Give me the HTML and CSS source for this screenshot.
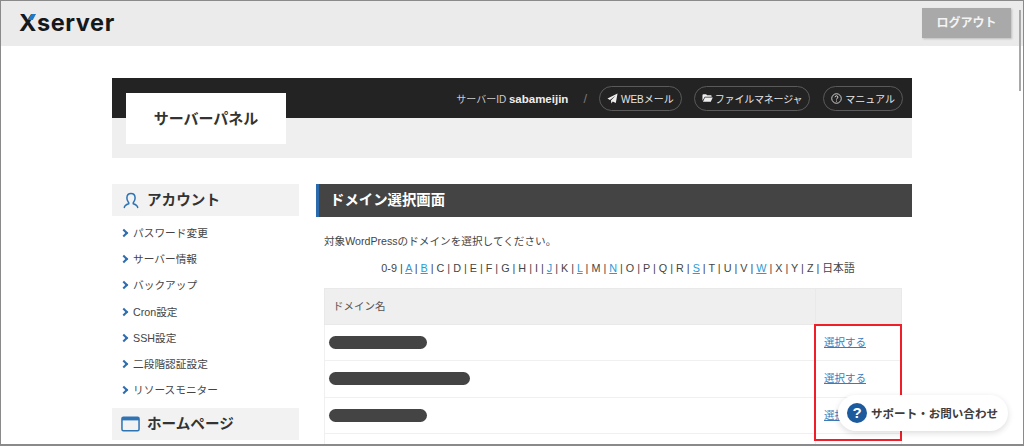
FILE: index.html
```html
<!DOCTYPE html>
<html lang="ja">
<head>
<meta charset="utf-8">
<title>サーバーパネル</title>
<link rel="stylesheet" href="styles.css">
</head>
<body>
<div class="window">
  <header class="topbar">
    <div class="logo"><span class="logo-x">X<i class="logo-tick"></i></span>server</div>
    <a class="logout">ログアウト</a>
  </header>
  <div class="scrollthumb"></div>
  <div class="page">
    <section class="panel">
      <div class="panel-dark">
        <div class="server-id">サーバーID <b>sabameijin</b></div>
        <span class="slash">/</span>
        <a class="pill">
          <svg class="pill-icon" viewBox="0 0 12 12"><path d="M11.5.5 9.6 11 6.3 9.2 4.8 11.5 4.3 8.2 9.5 2.6 3.2 7.5.5 6z" fill="#eee"/></svg>WEBメール</a>
        <a class="pill pill-files">
          <svg class="pill-icon pill-icon-wide" viewBox="0 0 12 10"><path d="M.5 2c0-.6.4-1 1-1h3l1 1h4c.5 0 1 .4 1 1v.6H3L.5 8z" fill="#eee"/><path d="M3.3 4.4h8.4L9.6 9H1z" fill="#eee"/></svg>ファイルマネージャ</a>
        <a class="pill pill-manual">
          <svg class="pill-icon" viewBox="0 0 12 12"><circle cx="6" cy="6" r="5.2" fill="none" stroke="#eee" stroke-width=".9"/><path d="M4.4 4.6C4.5 3.6 5.2 3.1 6 3.1c.9 0 1.6.6 1.6 1.4 0 1.2-1.6 1.3-1.6 2.6" fill="none" stroke="#eee"/><circle cx="6" cy="8.8" r=".6" fill="#eee"/></svg>マニュアル</a>
      </div>
      <div class="panel-light"></div>
      <div class="panel-tab">サーバーパネル</div>
    </section>
    <div class="columns">
      <aside class="sidebar">
        <h2 class="side-head">
          <svg class="side-icon" viewBox="0 0 18 18"><path d="M1.5 17c0-2.6 2-3.5 5-4.4.3-1-.1-1.3-.8-2.3C4.9 9.200 4.400 7.800 4.400 6.200 4.400 3 6.300 1.200 9 1.200s4.600 1.800 4.600 5c0 1.600-.5 3-1.300 4.100-.7 1-1.100 1.300-.8 2.300 3 .9 5 1.800 5 4.400" fill="none" stroke="#2e74b5" stroke-width="1.700" stroke-linecap="round"/></svg>
          <span class="side-text">アカウント</span>
        </h2>
        <ul class="side-list">
          <li>パスワード変更</li>
          <li>サーバー情報</li>
          <li>バックアップ</li>
          <li>Cron設定</li>
          <li>SSH設定</li>
          <li>二段階認証設定</li>
          <li>リソースモニター</li>
        </ul>
        <h2 class="side-head">
          <svg class="side-icon side-icon-wide" viewBox="0 0 20 16"><rect x="1" y="1" width="18" height="14" rx="1.500" fill="none" stroke="#2e74b5" stroke-width="1.600"/><rect x="1" y="1" width="18" height="3.200" fill="#2e74b5"/></svg>
          <span class="side-text">ホームページ</span>
        </h2>
      </aside>
      <main class="main">
        <h1 class="main-title">ドメイン選択画面</h1>
        <p class="lead">対象WordPressのドメインを選択してください。</p>
        <p class="alpha">0-9 | <a>A</a> | <a>B</a> | C | D | E | F | G | H | I | <a>J</a> | K | <a>L</a> | M | <a>N</a> | O | P | Q | R | <a>S</a> | T | U | V | <a>W</a> | X | Y | Z | 日本語</p>
        <div class="table-wrap">
          <table class="domains">
            <thead>
              <tr><th class="col-name">ドメイン名</th><th class="col-action"></th></tr>
            </thead>
            <tbody>
              <tr><td><span class="mask mask-s"></span></td><td><a class="select">選択する</a></td></tr>
              <tr><td><span class="mask mask-l"></span></td><td><a class="select">選択する</a></td></tr>
              <tr><td><span class="mask mask-s"></span></td><td><a class="select">選択する</a></td></tr>
              <tr><td></td><td></td></tr>
            </tbody>
          </table>
          <div class="highlight"></div>
        </div>
      </main>
    </div>
  </div>
  <a class="support"><span class="support-q">?</span>サポート・お問い合わせ</a>
</div>
</body>
</html>
```

FILE: styles.css
```css
* { box-sizing: border-box; }
html, body { margin: 0; height: 447px; overflow: hidden; background: #fff; }
body { font-family: "Liberation Sans", "Noto Sans CJK JP", sans-serif; color: #333; }

.window {
  position: relative;
  height: 446px;
  overflow: hidden;
  border: 1px solid #8a8a8a;
  border-width: 1px 1px 2px 1px;
  background: #fff;
}

.topbar {
  height: 45px;
  background: #ebebeb;
  display: flex;
  align-items: flex-start;
  justify-content: space-between;
  padding: 7px 12px 0 18px;
}
.logo {
  font-family: Inter, "Liberation Sans", sans-serif;
  font-weight: 700;
  font-size: 23.500px;
  line-height: 30px;
  letter-spacing: 0.6px;
  color: #16191c;
}
.logo-x { position: relative; display: inline-block; }
.logo-tick {
  position: absolute;
  left: 9px;
  top: 6px;
  width: 8px;
  height: 6px;
  background: #1f78c8;
  clip-path: polygon(40% 0, 100% 0, 60% 100%, 0 100%);
}
.logout {
  width: 89px;
  height: 30px;
  background: #a9a9a9;
  color: #f4f4f4;
  font-size: 12px;
  font-weight: 700;
  line-height: 30px;
  text-align: center;
  box-shadow: 1px 1px 2px rgba(0, 0, 0, .2);
}
.scrollthumb {
  position: absolute;
  top: 9px;
  right: 2px;
  width: 2px;
  height: 81px;
  background: #a8a8a8;
}

.page { width: 800px; margin: 32px 0 0 111px; }

.panel { position: relative; }
.panel-dark {
  height: 40px;
  background: #232323;
  display: flex;
  align-items: center;
  justify-content: flex-end;
  padding-right: 9px;
  color: #ddd;
  font-size: 10px;
}
.server-id { color: #ccc; }
.server-id b { color: #eee; font-size: 11.500px; }
.slash { margin: 0 12px 0 15px; color: #777; font-size: 13px; }
.pill {
  height: 25px;
  margin-left: 12px;
  padding: 0 7px;
  display: flex;
  align-items: center;
  border: 1px solid #5a5a5a;
  border-radius: 13px;
  color: #e6e6e6;
  white-space: nowrap;
}
.pill:first-of-type { margin-left: 0; }
.pill-files { letter-spacing: -0.2px; }
.pill-manual { margin-left: 13px; }
.pill-icon { width: 11px; height: 11px; margin-right: 3px; flex: none; }
.pill-icon-wide { height: 10px; margin-right: 2px; }
.panel-light { height: 40px; background: #efefef; }
.panel-tab {
  position: absolute;
  left: 14px;
  top: 15px;
  width: 160px;
  height: 51px;
  background: #fff;
  font-size: 15px;
  font-weight: 700;
  line-height: 51px;
  text-align: center;
  color: #333;
}

.columns { display: flex; gap: 17px; margin-top: 26px; align-items: flex-start; }

.sidebar { width: 187px; flex: none; }
.side-head {
  margin: 0;
  height: 32px;
  background: #f2f2f2;
  display: flex;
  align-items: center;
  gap: 8px;
  padding-left: 11px;
  font-size: 14.600px;
  font-weight: 700;
  color: #333;
}
.side-text { margin-top: -3px; }
.side-icon { width: 16px; height: 17px; }
.side-icon-wide { width: 19px; height: 16px; margin: 0 -1px 0 -2px; }
.side-list {
  list-style: none;
  margin: 0;
  padding: 4px 0 5px;
}
.side-list li {
  position: relative;
  height: 26.200px;
  line-height: 26px;
  padding-left: 21px;
  font-size: 10.700px;
  color: #444;
}
.side-list li::before {
  content: "";
  position: absolute;
  left: 9px;
  top: 10px;
  width: 4px;
  height: 4px;
  border-top: 2px solid #2e6db0;
  border-right: 2px solid #2e6db0;
  transform: rotate(45deg);
}

.main { width: 596px; flex: none; }
.main-title {
  margin: 0;
  height: 33px;
  background: #444;
  border-left: 3px solid #2a6aad;
  padding-left: 11px;
  color: #fff;
  font-size: 14.400px;
  font-weight: 700;
  line-height: 32px;
}
.lead { margin: 15px 0 0 8px; font-size: 10.630px; line-height: 18px; color: #444; }
.alpha {
  margin: 9px 0 0;
  padding-left: 8px;
  font-size: 10.800px;
  line-height: 18px;
  text-align: center;
  color: #444;
}
.alpha a { color: #2c9ad6; text-decoration: underline; }

.table-wrap { position: relative; margin: 11px 10px 0 8px; }
.domains { width: 578px; border-collapse: collapse; table-layout: fixed; font-size: 10.500px; }
.domains th, .domains td { border: 1px solid #f0f0f0; padding: 0; }
.domains th {
  height: 36px;
  background: #efefef;
  font-weight: 400;
  text-align: left;
  padding: 0 0 3px 8px;
  color: #555;
  border-color: #e9e9e9;
}
.domains td { height: 36.300px; padding-left: 4px; }
.col-action { width: 86px; }
.domains td + td { padding: 0 0 2px 8px; }
.select { color: #3d7ab8; text-decoration: underline; font-size: 10.500px; }
.mask { display: block; height: 13px; border-radius: 7px; background: #444; }
.mask-s { width: 98px; }
.mask-l { width: 141px; }
.highlight {
  position: absolute;
  left: 490px;
  top: 36px;
  width: 88px;
  height: 117px;
  border: 2px solid #f01e28;
}

.support {
  position: absolute;
  left: 837px;
  top: 394px;
  width: 170px;
  height: 36px;
  padding-left: 9px;
  display: flex;
  align-items: center;
  gap: 4px;
  background: #fff;
  border-radius: 18px;
  box-shadow: 0 2px 6px rgba(0, 0, 0, .14);
  font-size: 11.550px;
  font-weight: 700;
  color: #3d3d3d;
  white-space: nowrap;
}
.support-q {
  width: 20px;
  height: 20px;
  border-radius: 50%;
  background: #1c5a9e;
  color: #fff;
  font-size: 15px;
  font-weight: 700;
  line-height: 20px;
  text-align: center;
  flex: none;
}
```
